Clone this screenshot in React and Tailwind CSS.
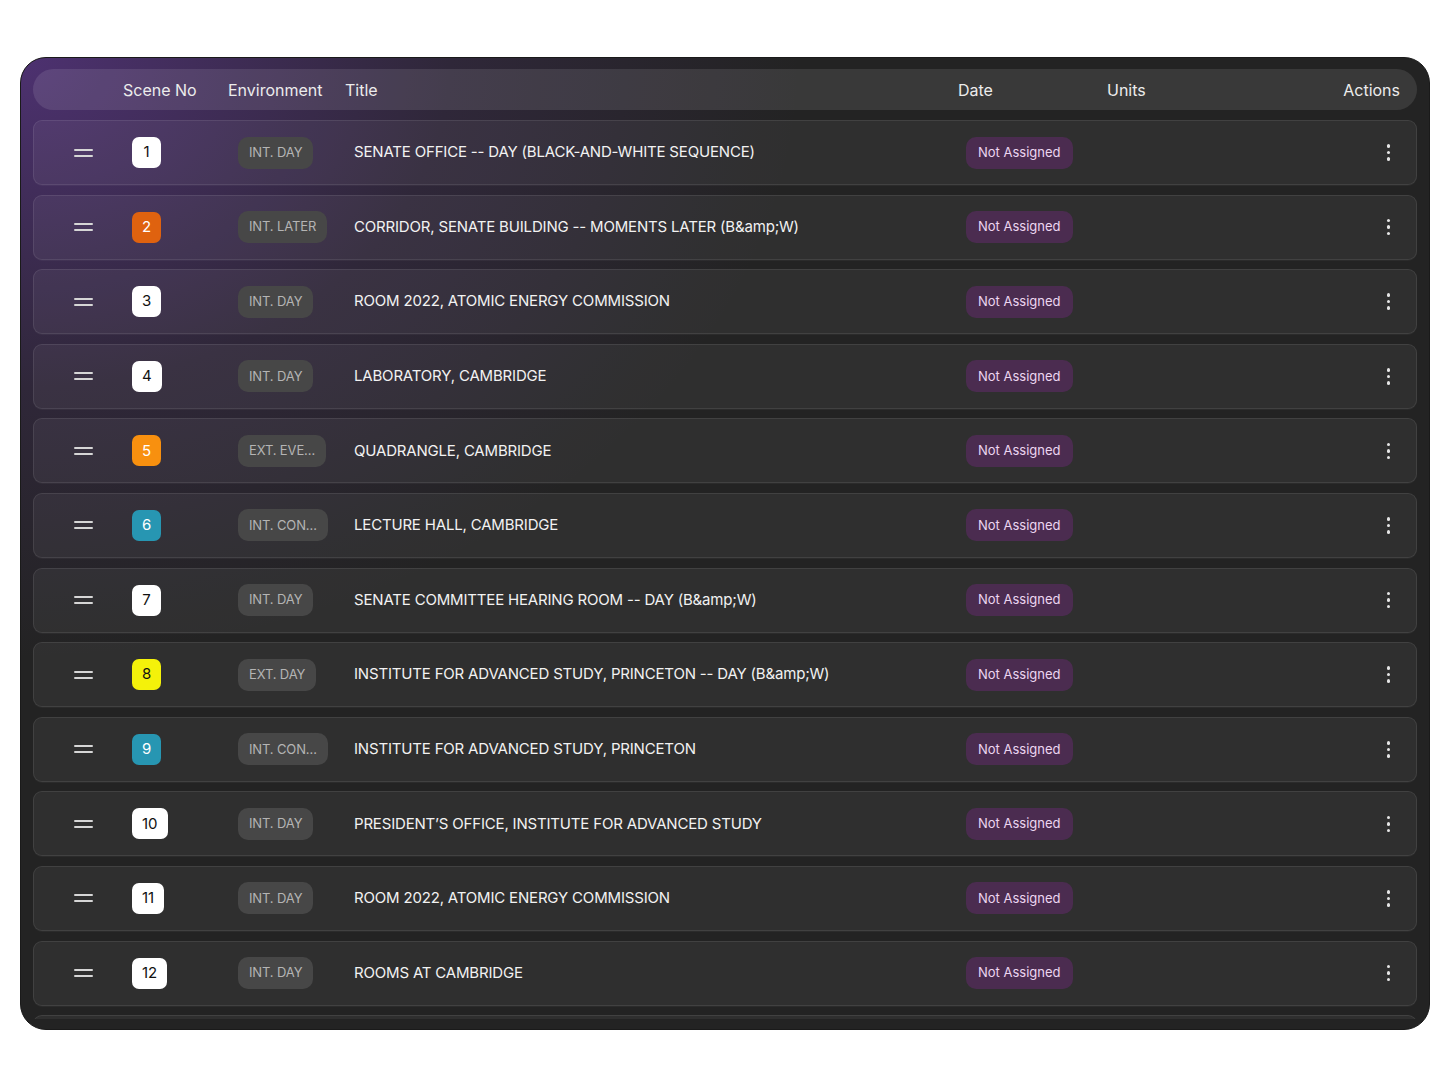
const scenes = [
  { no: 1, env: 'INT. DAY', title: 'SENATE OFFICE -- DAY (BLACK-AND-WHITE SEQUENCE)', color: 'white' },
  { no: 2, env: 'INT. LATER', title: 'CORRIDOR, SENATE BUILDING -- MOMENTS LATER (B&amp;W)', color: 'orange' },
  { no: 3, env: 'INT. DAY', title: 'ROOM 2022, ATOMIC ENERGY COMMISSION', color: 'white' },
  { no: 4, env: 'INT. DAY', title: 'LABORATORY, CAMBRIDGE', color: 'white' },
  { no: 5, env: 'EXT. EVE\u2026', title: 'QUADRANGLE, CAMBRIDGE', color: 'amber' },
  { no: 6, env: 'INT. CON\u2026', title: 'LECTURE HALL, CAMBRIDGE', color: 'teal' },
  { no: 7, env: 'INT. DAY', title: 'SENATE COMMITTEE HEARING ROOM -- DAY (B&amp;W)', color: 'white' },
  { no: 8, env: 'EXT. DAY', title: 'INSTITUTE FOR ADVANCED STUDY, PRINCETON -- DAY (B&amp;W)', color: 'yellow' },
  { no: 9, env: 'INT. CON\u2026', title: 'INSTITUTE FOR ADVANCED STUDY, PRINCETON', color: 'teal' },
  { no: 10, env: 'INT. DAY', title: 'PRESIDENT\u2019S OFFICE, INSTITUTE FOR ADVANCED STUDY', color: 'white' },
  { no: 11, env: 'INT. DAY', title: 'ROOM 2022, ATOMIC ENERGY COMMISSION', color: 'white' },
  { no: 12, env: 'INT. DAY', title: 'ROOMS AT CAMBRIDGE', color: 'white' },
];

const badgeColors = {
  white: 'bg-white text-[#111]',
  orange: 'bg-[#df620f] text-white',
  amber: 'bg-[#f8900f] text-white',
  teal: 'bg-[#2796b2] text-white',
  yellow: 'bg-[#f4f20a] text-[#111]',
};

const rowShell =
  'flex h-[65px] shrink-0 items-center rounded-[9px] border border-white/[0.09] bg-white/[0.055] pl-[40px] pr-[26px] shadow-[0_1px_0_rgba(255,255,255,0.04)]';

function DragHandle() {
  return (
    <div className="flex w-[19px] flex-col gap-[4px]">
      <span className="h-[2px] w-full rounded-full bg-[#d6d6d6]" />
      <span className="h-[2px] w-full rounded-full bg-[#d6d6d6]" />
    </div>
  );
}

function Kebab() {
  return (
    <div className="flex flex-col items-center gap-[3px]">
      <span className="h-[3.5px] w-[3.5px] rounded-full bg-[#e6e6e6]" />
      <span className="h-[3.5px] w-[3.5px] rounded-full bg-[#e6e6e6]" />
      <span className="h-[3.5px] w-[3.5px] rounded-full bg-[#e6e6e6]" />
    </div>
  );
}

function SceneRow({ scene }) {
  return (
    <div className={rowShell}>
      <DragHandle />
      <div className="w-[39px] shrink-0" />
      <div className="flex w-[106px] shrink-0 items-center">
        <span
          className={`inline-flex h-[31px] min-w-[29px] items-center justify-center rounded-[7px] px-[10px] text-[15px] ${badgeColors[scene.color]}`}
        >
          {scene.no}
        </span>
      </div>
      <div className="flex w-[116px] shrink-0 items-center">
        <span className="inline-flex h-[32px] items-center whitespace-nowrap rounded-[10px] bg-[#474747] px-[11px] text-[13px] tracking-[-0.01em] text-[#b4b4b4]">
          {scene.env}
        </span>
      </div>
      <div className="w-[612px] shrink-0 whitespace-nowrap pr-4 text-[15px] tracking-[-0.012em] text-[#f2f2f2]">{scene.title}</div>
      <div className="flex shrink-0 items-center">
        <span className="inline-flex h-[32px] items-center rounded-[10px] bg-[#4b2c50] px-[12px] text-[13px] text-[#ecd6f0]">
          Not Assigned
        </span>
      </div>
      <div className="ml-auto">
        <Kebab />
      </div>
    </div>
  );
}

export default function App() {
  return (
    <div className="min-h-screen bg-white pt-[57px] pl-[20px] font-['Inter',sans-serif]">
      <div className="flex h-[973px] w-[1410px] flex-col overflow-hidden rounded-[26px] border border-[#1a1a1a] bg-[#232323] bg-[radial-gradient(ellipse_780px_600px_at_0%_0%,rgba(95,55,145,0.7),rgba(95,55,145,0.2)_55%,transparent)] px-[12px] pt-[11px] pb-[10px]">
        <div className="flex h-[41px] shrink-0 items-center rounded-full bg-white/[0.1] pl-[90px] pr-[17px] text-[16px] text-[#ececec]">
          <div className="w-[105px] shrink-0">Scene No</div>
          <div className="w-[117px] shrink-0">Environment</div>
          <div className="w-[613px] shrink-0">Title</div>
          <div className="w-[149px] shrink-0">Date</div>
          <div className="shrink-0">Units</div>
          <div className="ml-auto">Actions</div>
        </div>
        <div className="mt-[10px] flex h-[899px] flex-col gap-[9.6px] overflow-hidden">
          {scenes.map((s) => (
            <SceneRow key={s.no} scene={s} />
          ))}
          {/* next row peeking in from below the fold */}
          <div className={rowShell} />
        </div>
      </div>
    </div>
  );
}
